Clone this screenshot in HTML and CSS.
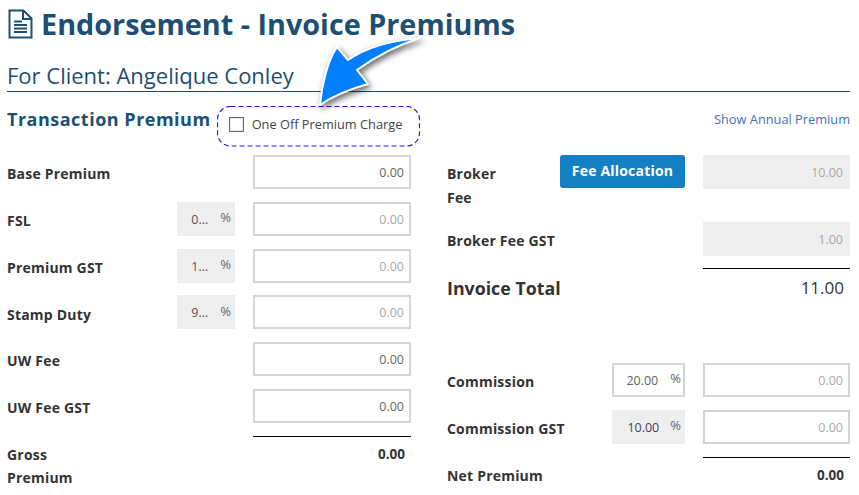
FILE: index.html
```html
<!DOCTYPE html>
<html lang="en">
<head>
<meta charset="utf-8">
<title>Endorsement - Invoice Premiums</title>
<link rel="stylesheet" href="styles.css">
</head>
<body>
<header class="title-row">
  <svg class="doc-icon" width="25" height="30" viewBox="0 0 25 30" aria-hidden="true">
    <path d="M1.5 1.5H15.5L23.5 9.5V28.5H1.5Z M15 1.5V10H23.5" fill="none" stroke="#1f4f73" stroke-width="2"/>
    <path d="M6 12.5H14M6 16H19M6 19.500H19M6 23H19" fill="none" stroke="#1f4f73" stroke-width="1.800"/>
  </svg>
  <h1 class="title">Endorsement - Invoice Premiums</h1>
</header>
<h2 class="client">For Client: Angelique Conley</h2>
<div class="section-row">
  <h3 class="section-title">Transaction Premium</h3>
  <label class="one-off">
    <svg class="dash" width="203" height="41" viewBox="0 0 203 41" aria-hidden="true"><rect x=".5" y=".5" width="202" height="39.500" rx="13" fill="none" stroke="#1f1fe0" stroke-width="1.200" stroke-dasharray="5 3"/></svg>
    <span class="check"></span><span class="one-off-text">One Off Premium Charge</span>
  </label>
  <a class="annual">Show Annual Premium</a>
</div>
<main class="columns">
  <section class="col col-left">
    <div class="row"><span class="lbl">Base Premium</span><span class="val">0.00</span></div>
    <div class="row"><span class="lbl">FSL</span><span class="pct ro nar"><i>0...</i><b>%</b></span><span class="val dim">0.00</span></div>
    <div class="row"><span class="lbl">Premium GST</span><span class="pct ro nar"><i>1...</i><b>%</b></span><span class="val dim">0.00</span></div>
    <div class="row"><span class="lbl">Stamp Duty</span><span class="pct ro nar"><i>9...</i><b>%</b></span><span class="val dim">0.00</span></div>
    <div class="row"><span class="lbl">UW Fee</span><span class="val">0.00</span></div>
    <div class="row"><span class="lbl">UW Fee GST</span><span class="val">0.00</span></div>
    <div class="total-row gross"><span class="lbl">Gross<br>Premium</span><span class="sum">0.00</span></div>
  </section>
  <section class="col col-right">
    <div class="row tall"><span class="lbl">Broker<br>Fee</span><button class="btn">Fee Allocation</button><span class="val ro dim">10.00</span></div>
    <div class="row"><span class="lbl">Broker Fee GST</span><span class="val ro dim">1.00</span></div>
    <div class="total-row invoice"><span class="big-lbl">Invoice Total</span><span class="big-sum">11.00</span></div>
    <div class="row"><span class="lbl">Commission</span><span class="pct"><i>20.00</i><b>%</b></span><span class="val dim">0.00</span></div>
    <div class="row"><span class="lbl">Commission GST</span><span class="pct ro dark"><i>10.00</i><b>%</b></span><span class="val dim">0.00</span></div>
    <div class="total-row net"><span class="lbl">Net Premium</span><span class="sum">0.00</span></div>
  </section>
</main>
<svg class="arrow" width="130" height="90" viewBox="0 0 130 90" aria-hidden="true">
  <path d="M20 80 C22 58 28 35 37 22 L48 35 C68 21 95 15 120 13 C98 20 75 32 57 45 L68 59 C50 64 33 71 20 80Z" fill="#0080ff" stroke="#fff" stroke-width="2" stroke-linejoin="round"/>
</svg>
</body>
</html>
```
FILE: styles.css
```css
* { box-sizing: border-box; }
html, body { margin: 0; padding: 0; }
body {
  width: 859px;
  height: 495px;
  overflow: hidden;
  position: relative;
  background: #fff;
  font-family: "Open Sans", sans-serif;
  color: #333;
  padding: 0 9px 0 7px;
}
.title-row {
  display: flex;
  align-items: center;
  gap: 8px;
  height: 47px;
  padding-left: 1px;
}
.title {
  margin: 0;
  font-size: 28.8px;
  line-height: 47px;
  font-weight: 700;
  color: #1d4e73;
}
.client {
  margin: 13px 0 0;
  height: 32px;
  font-size: 22px;
  line-height: 30px;
  font-weight: 400;
  color: #1d4e73;
  border-bottom: 1px solid #1d4e73;
}
.section-row {
  display: flex;
  align-items: flex-start;
  margin-top: 14px;
  height: 49px;
}
.section-title {
  margin: -1px 0 0;
  font-size: 18px;
  line-height: 28px;
  font-weight: 700;
  color: #1d4e73;
  letter-spacing: .5px;
}
.one-off {
  position: relative;
  display: flex;
  align-items: center;
  width: 203px;
  height: 41px;
  margin-left: 6px;
  padding: 0 0 5px 12px;
  font-size: 12.8px;
  color: #444;
}
.dash {
  position: absolute;
  left: 0;
  top: 0;
}
.check {
  width: 15px;
  height: 15px;
  margin-right: 8px;
  border: 1px solid #666;
  box-shadow: inset 0 0 0 1px #eee;
}
.annual {
  margin-left: auto;
  font-size: 12.8px;
  line-height: 27px;
  color: #3f6fb5;
}
.columns {
  display: flex;
  justify-content: space-between;
}
.col { display: flex; flex-direction: column; gap: 12.8px; }
.col-left { width: 404px; }
.col-right { width: 403px; }
.row {
  display: flex;
  align-items: center;
  height: 34px;
}
.lbl {
  flex: 1;
  font-size: 14px;
  line-height: 24px;
  font-weight: 700;
  color: #333;
  letter-spacing: .2px;
  padding-top: 4.6px;
}
.val, .pct {
  display: flex;
  align-items: center;
  justify-content: flex-end;
  height: 34px;
  font-size: 12.5px;
  color: #666;
  border: 2px solid #d4d4d4;
  background: #fff;
}
.val { padding: 1px 5px 0 0; }
.col-left .val { width: 158px; }
.col-right .val { width: 147px; }
.dim { color: #aaa; }
.ro { background: #eee; border-color: #eee; }
.pct {
  width: 73px;
  margin-right: 18px;
  padding: 1px 2px 0 0;
  position: relative;
}
.pct.nar { width: 58px; }
.pct i { font-style: normal; margin-right: 12px; }
.pct.dark i { color: #445; margin-right: 11px; }
.pct b { font-weight: 400; font-size: 13px; margin-top: -4px; }
.nar i { color: #555; }
.btn {
  width: 125px;
  height: 33px;
  margin: 0 18px 0 0;
  border: 0;
  border-radius: 3px;
  background: #1380c4;
  color: #fff;
  font-family: inherit;
  font-size: 14px;
  font-weight: 700;
  letter-spacing: .2px;
  padding: 0 0 3px;
}
.tall { margin-bottom: 20px; align-items: flex-start; }
.tall .lbl { padding-top: 7px; }
.total-row {
  position: relative;
  display: flex;
  justify-content: space-between;
}
.total-row::before {
  content: "";
  position: absolute;
  right: 0;
  top: 0;
  height: 1px;
  background: #000;
}
.col-left .total-row::before { width: 158px; }
.col-right .total-row::before { width: 147px; }
.invoice::before { margin-top: -1px; }
.sum {
  font-size: 13.5px;
  font-weight: 700;
  color: #333;
  padding: 3px 6px 0 0;
}
.gross { height: 60px; padding-top: 6px; }
.gross .lbl { line-height: 23px; padding-top: 1px; }
.invoice { height: 81.6px; padding-top: 6px; }
.big-lbl { font-size: 17.8px; line-height: 26px; font-weight: 700; color: #333; }
.big-sum { font-size: 17px; line-height: 26px; color: #333; padding-right: 6px; }
.net { height: 36px; padding-top: 3px; }
.net .sum { padding-top: 6px; }
.arrow {
  position: absolute;
  left: 300px;
  top: 25px;
  filter: drop-shadow(2px 3px 3px rgba(0,0,0,.6));
}
```
